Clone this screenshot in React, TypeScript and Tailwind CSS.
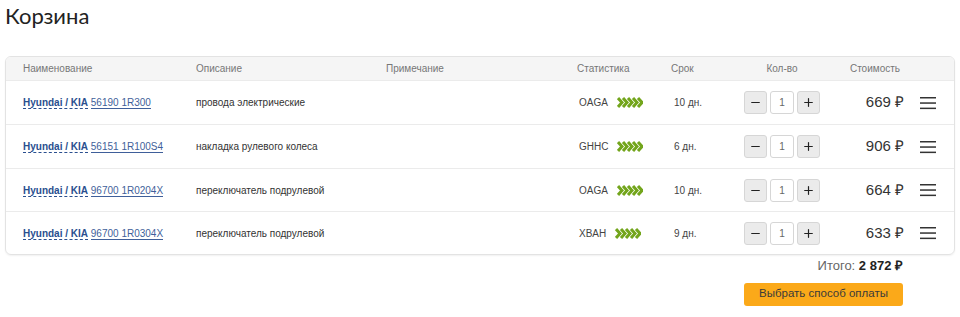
import { Minus, Plus } from 'lucide-react';

interface CartItem {
  brand: string;
  article: string;
  description: string;
  note: string;
  supplier: string;
  days: string;
  qty: number;
  price: string;
}

const items: CartItem[] = [
  { brand: 'Hyundai / KIA', article: '56190 1R300', description: 'провода электрические', note: '', supplier: 'OAGA', days: '10 дн.', qty: 1, price: '669' },
  { brand: 'Hyundai / KIA', article: '56151 1R100S4', description: 'накладка рулевого колеса', note: '', supplier: 'GHHC', days: '6 дн.', qty: 1, price: '906' },
  { brand: 'Hyundai / KIA', article: '96700 1R0204X', description: 'переключатель подрулевой', note: '', supplier: 'OAGA', days: '10 дн.', qty: 1, price: '664' },
  { brand: 'Hyundai / KIA', article: '96700 1R0304X', description: 'переключатель подрулевой', note: '', supplier: 'XBAH', days: '9 дн.', qty: 1, price: '633' },
];

const cols = 'grid grid-cols-[173px_190px_191px_94px_70px_82px_83px_1fr] items-center';

const Rating = () => (
  <svg width="26" height="11" viewBox="0 0 26 11" fill="none">
    {[0, 5, 10, 15, 20].map(x => (
      <polyline key={x} points={`${x + 1},1 ${x + 5},5.5 ${x + 1},10`} stroke="#73a51c" strokeWidth="3" />
    ))}
  </svg>
);

const CartRow = ({ item, tall }: { item: CartItem; tall: boolean }) => (
  <div className={`${cols} ${tall ? 'h-[44px]' : 'h-[43px]'} pl-[17px] border-t border-[#ebebeb] text-[10px] text-[#333]`}>
    <div className="whitespace-nowrap">
      <a className="font-bold text-[#2a4f8f] border-b border-dashed border-[#2a4f8f]">{item.brand}</a>{' '}
      <a className="text-[#3f5f9a] border-b border-[#3f5f9a]">{item.article}</a>
    </div>
    <div>{item.description}</div>
    <div>{item.note}</div>
    <div className="flex items-center gap-[9px] pl-[2px] text-[#444]">
      <span>{item.supplier}</span>
      <Rating />
    </div>
    <div className="pl-[3px] text-[#444]">{item.days}</div>
    <div className="flex items-center gap-[3px] pl-[3px]">
      <button className="w-[23px] h-[23px] flex items-center justify-center rounded-[3px] border border-[#d6d6d6] bg-[#ebebeb]">
        <Minus size={13} strokeWidth={2.2} color="#222" />
      </button>
      <div className="w-[24px] h-[23px] flex items-center justify-center rounded-[3px] border border-[#d6d6d6] bg-white text-[#666]">
        {item.qty}
      </div>
      <button className="w-[23px] h-[23px] flex items-center justify-center rounded-[3px] border border-[#d6d6d6] bg-[#ebebeb]">
        <Plus size={13} strokeWidth={2.2} color="#222" />
      </button>
    </div>
    <div className="text-right text-[15px] text-[#333] pr-[2px]">{item.price} ₽</div>
    <div className="flex pl-[14px]">
      <svg width="16" height="14" viewBox="0 0 16 14">
        <rect x="0" y="1" width="16" height="1.5" fill="#333" />
        <rect x="0" y="6.3" width="16" height="1.5" fill="#333" />
        <rect x="0" y="11.6" width="16" height="1.5" fill="#333" />
      </svg>
    </div>
  </div>
);

export default function App() {
  return (
    <div className="w-[960px] h-[317px] bg-white font-['Liberation_Sans',Arial,sans-serif]">
      <h1 className="pl-[5px] h-[56px] text-[22px] leading-[32px] text-[#222] font-['Lato',sans-serif]">Корзина</h1>
      <div className="mx-[5px] rounded-[6px] border border-[#e3e3e3] shadow-[0_1px_2px_rgba(0,0,0,0.06)] overflow-hidden">
        <div className={`${cols} h-[23px] pl-[17px] bg-[#f5f5f5] text-[10px] text-[#777]`}>
          <div>Наименование</div>
          <div>Описание</div>
          <div>Примечание</div>
          <div>Статистика</div>
          <div>Срок</div>
          <div className="text-center">Кол-во</div>
          <div className="text-right pr-[6px]">Стоимость</div>
          <div></div>
        </div>
        {items.map((item, i) => (
          <CartRow key={item.article} item={item} tall={i < 2} />
        ))}
      </div>
      <div className="w-[903px] flex flex-col items-end">
        <div className="mt-[1px] text-[13px] text-[#666]">
          Итого: <span className="font-bold text-[#222]">2 872 ₽</span>
        </div>
        <button className="mt-[7px] w-[159px] h-[23px] rounded-[3px] bg-[#fba919] text-[11.5px] text-[#3a3a3a]">
          Выбрать способ оплаты
        </button>
      </div>
    </div>
  );
}
